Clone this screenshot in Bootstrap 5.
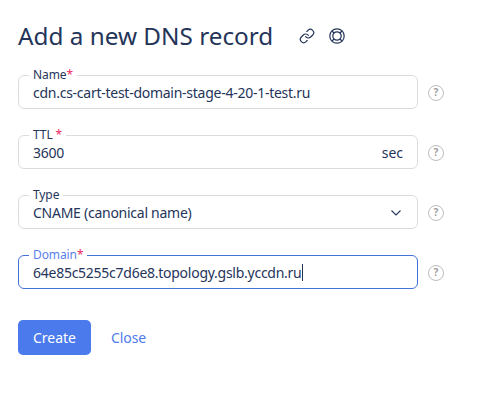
<!doctype html>
<html lang="en"><head><meta charset="utf-8"><title>Add a new DNS record</title>
<link href="https://cdn.jsdelivr.net/npm/bootstrap@5.3.0/dist/css/bootstrap.min.css" rel="stylesheet">
<style>
body{font-family:"Noto Sans","Liberation Sans",sans-serif;color:#25355a;background:#fff;font-size:14px}
.wrap{padding:22px 0 0 18px;width:450px}
.ttl{font-size:24.3px;font-weight:400;line-height:28px;margin:0;color:#25355a}
.ttl-row{gap:26px;margin-bottom:25px}
.ttl-icons{gap:14px}
.fieldrow{gap:10px;margin-bottom:26px;align-items:flex-start}
.fbox{width:400px;height:34px;border:1px solid #dcdcdc;border-radius:6px;padding:1px 14px 0;margin:0;min-width:0;position:relative;display:flex;align-items:center}
.fbox legend{float:none;width:auto;font-size:12px;line-height:12px;letter-spacing:-.1px;padding:0 4px;margin:0;height:12px;color:#25355a;position:absolute;top:-7px;left:10px;background:#fff}
.fbox.on{border-color:#4272d7}
.fbox.on legend{color:#5b7fe8}
.req{color:#ee2a5f}
.fval{border:0;outline:0;padding:0;margin:0;width:100%;background-color:transparent;color:#25355a;font-size:14px;line-height:20px;letter-spacing:-.26px;box-shadow:none;border-radius:0;min-height:0}
.fval:focus{box-shadow:none;color:#25355a;background-color:transparent}
select.fval{background-image:url("data:image/svg+xml,%3csvg xmlns='http://www.w3.org/2000/svg' viewBox='0 0 10 6'%3e%3cpath fill='none' stroke='%2325355a' stroke-width='1.1' d='M.5.5 5 5 9.5.5'/%3e%3c/svg%3e");background-position:right 2px center;background-size:10px 6px}
.unit{font-size:14px;color:#25355a;flex:none}
.car{display:inline-block;width:1px;height:17px;background:#25355a;vertical-align:-3px}
.hlp{width:16px;height:16px;border:1.5px solid #bdbdbd;border-radius:50%;color:#9e9e9e;font-size:10px;font-weight:700;line-height:13px;text-align:center;flex:none;margin-top:10px}
.acts{gap:20px;margin-top:31px}
.btn-make{background:#4a7aec;border:0;color:#fff;font-size:14px;width:73px;height:35px;border-radius:5px;padding:0}
.btn-make:hover{background:#4a7aec;color:#fff}
.lnk{color:#4f7bec;font-size:14px;letter-spacing:-.1px;text-decoration:none}
</style></head><body>
<div class="wrap">
<div class="d-flex align-items-center ttl-row">
<h1 class="ttl">Add a new DNS record</h1>
<div class="d-flex align-items-center ttl-icons">
<svg width="16" height="16" viewBox="0 0 24 24" fill="none" stroke="#25355a" stroke-width="1.8" stroke-linecap="round" stroke-linejoin="round"><path d="M10 13a5 5 0 0 0 7.54.54l3-3a5 5 0 0 0-7.07-7.07l-1.72 1.71"/><path d="M14 11a5 5 0 0 0-7.54-.54l-3 3a5 5 0 0 0 7.07 7.07l1.71-1.71"/></svg>
<svg width="16" height="16" viewBox="0 0 16 16" fill="none" stroke="#25355a" stroke-width="1.2"><circle cx="8" cy="8" r="7.2"/><circle cx="8" cy="8" r="4.2"/><path d="M3 3l2 2M13 3l-2 2M3 13l2-2M13 13l-2-2"/></svg>
</div></div>
<form>
<div class="d-flex fieldrow"><fieldset class="fbox"><legend>Name<span class="req">*</span></legend><input class="fval" value="cdn.cs-cart-test-domain-stage-4-20-1-test.ru"></fieldset><span class="hlp">?</span></div>
<div class="d-flex fieldrow"><fieldset class="fbox"><legend>TTL <span class="req">*</span></legend><input class="fval" value="3600"><span class="unit">sec</span></fieldset><span class="hlp">?</span></div>
<div class="d-flex fieldrow"><fieldset class="fbox"><legend>Type</legend><select class="form-select fval"><option>CNAME (canonical name)</option></select></fieldset><span class="hlp">?</span></div>
<div class="d-flex fieldrow"><fieldset class="fbox on"><legend>Domain<span class="req">*</span></legend><div class="fval">64e85c5255c7d6e8.topology.gslb.yccdn.ru<span class="car"></span></div></fieldset><span class="hlp">?</span></div>
<div class="d-flex align-items-center acts"><button type="button" class="btn btn-make">Create</button><a href="#" class="lnk">Close</a></div>
</form>
</div>
<script src="https://cdn.jsdelivr.net/npm/bootstrap@5.3.0/dist/js/bootstrap.bundle.min.js"></script>
</body></html>
